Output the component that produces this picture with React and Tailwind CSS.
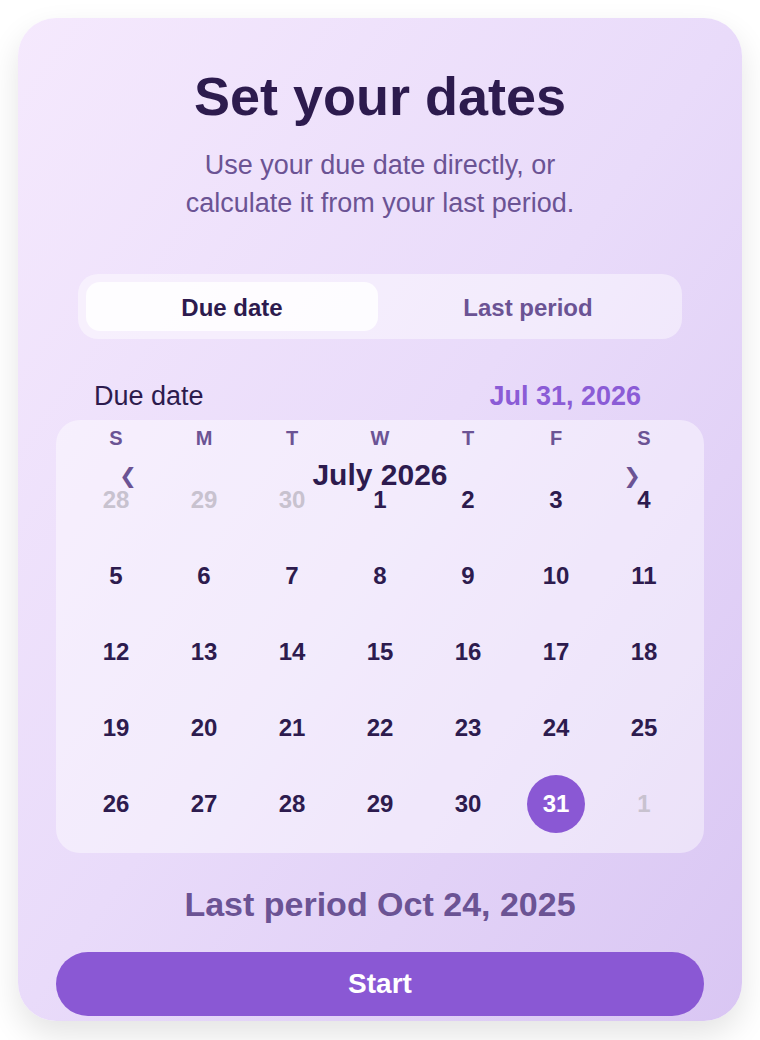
import React from 'react';

const weekdays = ['S', 'M', 'T', 'W', 'T', 'F', 'S'];

const days = [
  { n: 28, muted: true }, { n: 29, muted: true }, { n: 30, muted: true },
  { n: 1 }, { n: 2 }, { n: 3 }, { n: 4 },
  { n: 5 }, { n: 6 }, { n: 7 }, { n: 8 }, { n: 9 }, { n: 10 }, { n: 11 },
  { n: 12 }, { n: 13 }, { n: 14 }, { n: 15 }, { n: 16 }, { n: 17 }, { n: 18 },
  { n: 19 }, { n: 20 }, { n: 21 }, { n: 22 }, { n: 23 }, { n: 24 }, { n: 25 },
  { n: 26 }, { n: 27 }, { n: 28 }, { n: 29 }, { n: 30 }, { n: 31, selected: true }, { n: 1, muted: true },
];

const App = () => {
  return (
    <div className="min-h-[1040px] bg-white p-[18px] font-['Liberation_Sans',Arial,sans-serif]">
      <div className="flex w-[724px] flex-col rounded-[38px] bg-gradient-to-br from-[#f5e9fd] via-[#e9dbfa] to-[#d9c6f3] px-[38px] pt-[46px] pb-[5px] shadow-[0_14px_32px_rgba(0,0,0,0.11)]">
        {/* Header */}
        <h1 className="text-center text-[54px] font-bold leading-[65px] text-[#2d1b4e]">Set your dates</h1>
        <p className="mt-[17px] text-center text-[27px] leading-[38px] text-[#6b5394]">
          Use your due date directly, or
          <br />
          calculate it from your last period.
        </p>

        {/* Tabs */}
        <div className="mx-[22px] mt-[52px] flex gap-[4px] rounded-[20px] bg-white/45 p-[8px]">
          <button className="h-[49px] flex-1 rounded-[14px] bg-white/85 pt-[2px] text-[24px] font-bold text-[#2d1b4e]">Due date</button>
          <button className="h-[49px] flex-1 rounded-[14px] pt-[2px] text-[24px] font-bold text-[#6b5394]">Last period</button>
        </div>

        {/* Due date row */}
        <div className="mt-[42px] flex items-center justify-between pl-[38px] pr-[63px] leading-[31px]">
          <span className="text-[27px] text-[#2d1b4e]">Due date</span>
          <span className="text-[27px] font-bold text-[#8b5cd6]">Jul 31, 2026</span>
        </div>

        {/* Calendar */}
        <div className="mt-[8px] rounded-[24px] bg-white/45 px-[16px] pt-[6px] pb-[11px]">
          <div className="grid h-[24px] grid-cols-7 text-center text-[20px] font-bold leading-[24px] text-[#6b5394]">
            {weekdays.map((d, i) => (
              <span key={i}>{d}</span>
            ))}
          </div>
          <div className="relative z-10 mt-[6px] flex h-[36px] items-center justify-between px-[40px]">
            <span className="flex w-8 justify-center pt-[6px] font-['DejaVu_Sans',sans-serif] text-[21px] font-bold text-[#6b5394]">❮</span>
            <span className="text-[30px] font-bold text-[#2d1b4e]">July 2026</span>
            <span className="flex w-8 justify-center pt-[6px] font-['DejaVu_Sans',sans-serif] text-[21px] font-bold text-[#6b5394]">❯</span>
          </div>
          <div className="-mt-[30px] grid grid-cols-7">
            {days.map((d, i) => (
              <div key={i} className="flex h-[76px] items-center justify-center">
                {d.selected ? (
                  <span className="flex h-[58px] w-[58px] items-center justify-center rounded-full bg-[#8a58d4] text-[24px] font-bold text-white">
                    {d.n}
                  </span>
                ) : (
                  <span className={`text-[24px] font-bold ${d.muted ? 'text-[#c8c2cf]' : 'text-[#2d1b4e]'}`}>{d.n}</span>
                )}
              </div>
            ))}
          </div>
        </div>

        {/* Last period */}
        <p className="mt-[32px] text-center text-[34px] font-bold leading-[39px] text-[#6b5394]">Last period Oct 24, 2025</p>

        <button className="mt-[28px] h-[64px] w-full rounded-full bg-[#8a58d4] text-[28px] font-bold text-white">Start</button>
      </div>
    </div>
  );
};

export default App;
